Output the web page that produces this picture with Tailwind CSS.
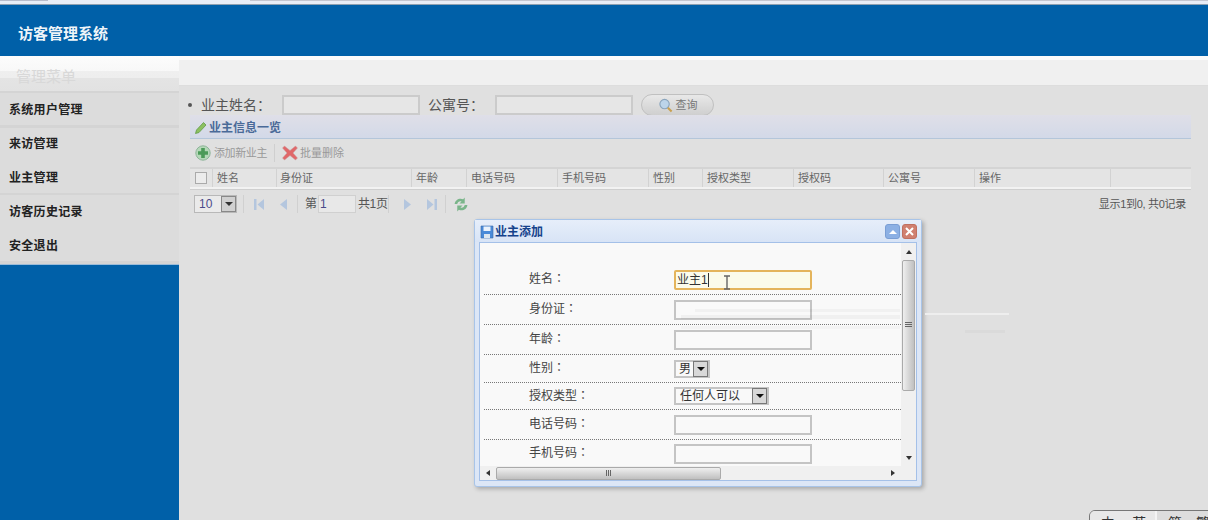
<!DOCTYPE html>
<html lang="zh-CN">
  <head>
    <meta charset="UTF-8" />
    <title>访客管理系统</title>
    <script src="https://cdn.jsdelivr.net/npm/@tailwindcss/browser@4"></script>
  </head>
  <body class="relative w-[1208px] h-[520px] overflow-hidden bg-[#e0e0e0] text-[#555] font-['Liberation_Sans','Noto_Sans_CJK_SC',sans-serif] text-xs">
    <!-- browser strip -->
    <div class="h-[4px] bg-[#e8edf6] flex justify-between">
      <div class="w-[48px] h-[1px] bg-[#b8bccb]"></div>
      <div class="w-[958px] h-[1px] bg-[#c4c6d0]"></div>
    </div>
    <div class="h-[1px] bg-[#8fa0b0]"></div>

    <!-- header -->
    <div class="h-[51px] bg-[#0060a8] flex items-center pl-[18px] pt-[6px] text-[15px] font-bold text-white/95">访客管理系统</div>

    <div class="flex h-[464px]">
      <!-- left menu -->
      <div class="w-[179px] bg-[#0060a8] flex flex-col">
        <div class="h-[35px] pl-[16px] pt-[10px] text-[15px] leading-[21px] text-[#d8d8d8] bg-[linear-gradient(#fcfcfc_0,#f8f8f8_15px,#efefef_15px,#eeeeee_22px,#e4e4e4_22px,#e2e2e2_100%)]">管理菜单</div>
        <div class="h-[34px] flex items-center pl-[9px] pt-[2px] font-bold tracking-[.3px] text-[#222] bg-[#dcdcdc] border-t-[2px] border-[#d4d4d4]">系统用户管理</div>
        <div class="h-[34px] flex items-center pl-[9px] font-bold tracking-[.3px] text-[#222] bg-[#dcdcdc] border-t-[3px] border-[#d4d4d4]">来访管理</div>
        <div class="h-[34px] flex items-center pl-[9px] pt-[4px] font-bold tracking-[.3px] text-[#222] bg-[#dcdcdc]">业主管理</div>
        <div class="h-[34px] flex items-center pl-[9px] pt-[2px] font-bold tracking-[.3px] text-[#222] bg-[#dcdcdc] border-t-[2px] border-[#d4d4d4]">访客历史记录</div>
        <div class="h-[37px] flex items-center pl-[9px] pt-[3px] font-bold tracking-[.3px] text-[#222] bg-[#dcdcdc] border-b-[3px] border-[#d4d4d4]">安全退出</div>
        <div class="h-px bg-[#9dbcd8]"></div>
      </div>

      <!-- main -->
      <div class="flex-1 flex flex-col">
        <div class="h-[4px] bg-[#fafafa]"></div>
        <div class="h-[26px] bg-[#f0f0f0] border-b border-[#ddd]"></div>

        <!-- search -->
        <div class="h-[20px] mt-[9px] flex items-center pl-[9px] text-[14px] text-[#555]">
          <span class="w-[4px] h-[4px] rounded-full bg-[#555] mr-[9px]"></span>
          <span class="w-[81px]">业主姓名：</span>
          <div class="w-[138px] h-[20px] border-2 border-[#cbcbcb] bg-[#e6e6e6]"></div>
          <span class="w-[67px] ml-[8px]">公寓号：</span>
          <div class="w-[138px] h-[20px] border-2 border-[#cbcbcb] bg-[#e6e6e6]"></div>
          <div class="ml-[8px] w-[73px] h-[22px] rounded-full border border-[#c0c0c0] bg-gradient-to-b from-[#e8e8e8] to-[#cfcfcf] flex items-center justify-center gap-[3px] text-[11px] text-[#777]">
            <svg width="15" height="15" viewBox="0 0 16 16"><circle cx="7" cy="6.500" r="5" fill="#bcd4ea" stroke="#8aa4bc" stroke-width="1.200"/><path d="M10.500 10.500l4 4" stroke="#c9a050" stroke-width="2.200"/></svg>
            <span>查询</span>
          </div>
        </div>

        <!-- grid panel -->
        <div class="ml-[11px] w-[1001px]">
          <div class="h-[24px] flex items-center pl-[4px] pt-[2px] gap-[2px] font-bold text-[#4a6a98] bg-gradient-to-b from-[#dfdfe8] to-[#d3d9e8] border-b border-[#b4c6da]">
            <svg width="13" height="14" viewBox="0 0 13 14"><path d="M1.500 12.500l1-3.500 7-7.500 2.500 2.500-7 7.500z" fill="#8cc060" stroke="#5f9a48" stroke-width=".8"/></svg>
            <span>业主信息一览</span>
          </div>
          <div class="h-[28px] flex items-center pl-[5px] text-[11px] text-[#999]">
            <svg width="16" height="16" viewBox="0 0 16 16"><circle cx="8" cy="8" r="7.200" fill="#b5d8b8" stroke="#8fb49a"/><path d="M6.200 3h3.600v3.200H13v3.600H9.800V13H6.200V9.800H3V6.200h3.200z" fill="#4b9a58"/></svg>
            <span class="ml-[3px] mr-[7px] w-[53px] whitespace-nowrap tracking-[-.4px]">添加新业主</span>
            <span class="w-px h-[18px] bg-[#cfcfcf] mr-[7px]"></span>
            <svg width="16" height="16" viewBox="0 0 16 16"><path d="M2.500 1L8 5.500 13.500 1 15.500 3 11 8l4.500 5-2 2L8 10.500 2.500 15 .5 13 5 8 .5 3z" fill="#e0686a" stroke="#c9a0a0" stroke-width=".5"/></svg>
            <span class="ml-[2px]">批量删除</span>
          </div>
          <!-- header row -->
          <div class="h-[22px] flex text-[11px] border-t-[2px] border-b-[2px] border-t-[#d4d4d4] border-b-[#f2f2f2] bg-[#e4e4e4] text-[#666]">
            <div class="w-[23px] pl-[5px] flex items-center border-r border-[#d2d2d2]"><span class="w-[12px] h-[12px] border border-[#aaa] bg-[#ececec]"></span></div>
            <div class="w-[64px] pl-[4px] flex items-center border-r border-[#d2d2d2]">姓名</div>
            <div class="w-[135px] pl-[3px] flex items-center border-r border-[#d2d2d2]">身份证</div>
            <div class="w-[55px] pl-[4px] flex items-center border-r border-[#d2d2d2]">年龄</div>
            <div class="w-[91px] pl-[4px] flex items-center border-r border-[#d2d2d2]">电话号码</div>
            <div class="w-[91px] pl-[4px] flex items-center border-r border-[#d2d2d2]">手机号码</div>
            <div class="w-[54px] pl-[4px] flex items-center border-r border-[#d2d2d2]">性别</div>
            <div class="w-[91px] pl-[4px] flex items-center border-r border-[#d2d2d2]">授权类型</div>
            <div class="w-[90px] pl-[4px] flex items-center border-r border-[#d2d2d2]">授权码</div>
            <div class="w-[91px] pl-[4px] flex items-center border-r border-[#d2d2d2]">公寓号</div>
            <div class="w-[136px] pl-[4px] flex items-center border-r border-[#d2d2d2]">操作</div>
          </div>
          <div class="h-px bg-[#cfcfcf]"></div>
          <!-- pager -->
          <div class="h-[28px] flex items-center pl-[4px] text-[#555]">
            <div class="w-[43px] h-[18px] border border-[#b8b8b8] bg-[#eaeaea] flex items-center justify-between pl-[4px] text-[#4a4a8a]">
              <span>10</span>
              <span class="w-[15px] h-[16px] bg-[#d0d0d0] border border-[#888] flex items-center justify-center"><span class="border-x-[4px] border-t-[4px] border-x-transparent border-t-[#333]"></span></span>
            </div>
            <span class="w-px h-[18px] bg-[#d0d0d0] ml-[6px] mr-[10px]"></span>
            <svg width="10" height="13" viewBox="0 0 10 13" class="mr-[16px]"><path d="M0 1h2.500v11H0zM10 1v11L3.500 6.500z" fill="#b4c6de"/></svg>
            <svg width="7" height="13" viewBox="0 0 7 13" class="mr-[10px]"><path d="M7 1v11L0 6.500z" fill="#b4c6de"/></svg>
            <span class="w-px h-[18px] bg-[#d0d0d0] mr-[7px]"></span>
            <span>第</span>
            <div class="w-[38px] h-[18px] ml-px mr-[2px] border border-[#d0d0d0] bg-[#e8e8e8] pl-px leading-[16px] text-[#4a4a8a]">1</div>
            <span class="w-[27px] whitespace-nowrap tracking-[-.4px]">共1页</span>
            <span class="w-px h-[18px] bg-[#d0d0d0] ml-[3px] mr-[15px]"></span>
            <svg width="7" height="13" viewBox="0 0 7 13" class="mr-[16px]"><path d="M0 1v11l7-5.500z" fill="#b4c6de"/></svg>
            <svg width="10" height="13" viewBox="0 0 10 13" class="mr-[8px]"><path d="M0 1v11l6.500-5.500zM7.500 1H10v11H7.500z" fill="#b4c6de"/></svg>
            <span class="w-px h-[18px] bg-[#d0d0d0] mr-[7px]"></span>
            <svg width="16" height="15" viewBox="0 0 15 14"><path d="M1.500 6.500C2 2.500 6 .5 9.500 2L11 .5V6H6L8 4.200C6 3.500 4.500 4.800 4 6.500zM13.500 7.500C13 11.500 9 13.500 5.500 12L4 13.500V8h5L7 9.800c2 .7 3.500-.6 4-2.300z" fill="#7ab58a"/></svg>
            <span class="ml-auto mr-[5px] text-[11px] tracking-[-.3px] text-[#555]">显示1到0, 共0记录</span>
          </div>
        </div>
      </div>
    </div>

    <!-- dialog -->
    <div class="absolute left-[474px] top-[219px] w-[448px] h-[268px] rounded-[3px] border border-[#a8c4e8] bg-[#dce6f6] shadow-[2px_2px_4px_rgba(0,0,0,.25)] flex flex-col px-[4px] pb-[5px]">
      <div class="h-[22px] flex items-center gap-px pt-[1px] font-bold text-[#15428b] bg-gradient-to-b from-[#e6eefa] to-[#d8e4f6] -mx-[4px] pl-[5px] pr-[4px]">
        <svg width="14" height="14" viewBox="0 0 14 14"><path d="M1 1h12v12H1z" fill="#4a8ad8" stroke="#3a6aa8" stroke-width=".6"/><path d="M3.500 1.500h7v4.500h-7z" fill="#eaf2fc"/><path d="M4 9h6v4H4z" fill="#dce6f0"/></svg>
        <span>业主添加</span>
        <span class="ml-auto w-[15px] h-[15px] rounded-[3px] bg-[#8cb0e4] border border-[#7a9ed4] flex items-center justify-center"><span class="border-x-[4px] border-b-[4px] border-x-transparent border-b-white"></span></span>
        <span class="ml-px w-[15px] h-[15px] rounded-[3px] bg-[#d08070] border border-[#c07060] flex items-center justify-center text-white leading-none">
          <svg width="9" height="9" viewBox="0 0 9 9"><path d="M1 1l7 7M8 1L1 8" stroke="#fff" stroke-width="2"/></svg>
        </span>
      </div>
      <div class="flex-1 border border-[#a4c0e8] bg-[#f9f9f9] relative overflow-hidden">
        <!-- form rows -->
        <div class="pl-[4px] w-[421px] text-[#444]">
          <div class="h-[52px] flex items-end pb-[4px] pl-[45px] border-b border-dotted border-[#777]">
            <span class="w-[145px] mb-[3px]">姓名<span lang="zh-TW" class="font-['Noto_Sans_CJK_TC']">：</span></span>
            <div class="w-[138px] h-[20px] border-2 border-[#e4b45c] bg-[#fbfbeb] rounded-[2px] pl-[1px] text-[#333] leading-[16px] flex items-center">业主1<span class="w-px h-[14px] bg-[#333]"></span></div>
          </div>
          <div class="h-[30px] flex items-center pl-[45px] border-b border-dotted border-[#777]">
            <span class="w-[145px] mb-[3px]">身份证<span lang="zh-TW" class="font-['Noto_Sans_CJK_TC']">：</span></span>
            <div class="w-[138px] h-[20px] border-2 border-[#c4c4c4] bg-[#f9f9f9]"></div>
          </div>
          <div class="h-[30px] flex items-center pl-[45px] border-b border-dotted border-[#777]">
            <span class="w-[145px] mb-[2px]">年龄<span lang="zh-TW" class="font-['Noto_Sans_CJK_TC']">：</span></span>
            <div class="w-[138px] h-[20px] border-2 border-[#c4c4c4] bg-[#f9f9f9]"></div>
          </div>
          <div class="h-[28px] flex items-center pl-[45px] border-b border-dotted border-[#777]">
            <span class="w-[145px] mb-[2px]">性别<span lang="zh-TW" class="font-['Noto_Sans_CJK_TC']">：</span></span>
            <div class="w-[36px] h-[18px] border-2 border-[#c4c4c4] bg-[#f9f9f9] flex items-center justify-between pl-[3px] text-[#333]">
              <span>男</span>
              <span class="w-[15px] h-[16px] bg-[#d8d8d8] border border-[#777] flex items-center justify-center"><span class="border-x-[4px] border-t-[4px] border-x-transparent border-t-[#111]"></span></span>
            </div>
          </div>
          <div class="h-[27px] flex items-center pl-[45px] border-b border-dotted border-[#777]">
            <span class="w-[145px] mb-[1px]">授权类型<span lang="zh-TW" class="font-['Noto_Sans_CJK_TC']">：</span></span>
            <div class="w-[95px] h-[18px] border-2 border-[#c4c4c4] bg-[#f9f9f9] flex items-center justify-between pl-[4px] text-[#333]">
              <span>任何人可以</span>
              <span class="w-[15px] h-[16px] bg-[#d8d8d8] border border-[#777] flex items-center justify-center"><span class="border-x-[4px] border-t-[4px] border-x-transparent border-t-[#111]"></span></span>
            </div>
          </div>
          <div class="h-[30px] flex items-center pl-[45px] border-b border-dotted border-[#777]">
            <span class="w-[145px] mb-[2px]">电话号码<span lang="zh-TW" class="font-['Noto_Sans_CJK_TC']">：</span></span>
            <div class="w-[138px] h-[20px] border-2 border-[#c4c4c4] bg-[#f9f9f9]"></div>
          </div>
          <div class="h-[30px] flex items-start pt-[4px] pl-[45px]">
            <span class="w-[145px]">手机号码<span lang="zh-TW" class="font-['Noto_Sans_CJK_TC']">：</span></span>
            <div class="w-[138px] h-[20px] border-2 border-[#c4c4c4] bg-[#f9f9f9]"></div>
          </div>
        </div>

        <!-- vertical scrollbar -->
        <div class="absolute right-0 top-0 bottom-[14px] w-[15px] bg-[#f0f0f0] flex flex-col items-center">
          <span class="mt-[7px] border-x-[3px] border-b-[4px] border-x-transparent border-b-[#333]"></span>
          <div class="mt-[6px] w-[13px] h-[131px] border border-[#aaa] rounded-[2px] bg-gradient-to-r from-[#efefef] to-[#c0c0c0] flex flex-col items-center justify-start pt-[61px] gap-px">
            <span class="w-[7px] h-px bg-[#666]"></span><span class="w-[7px] h-px bg-[#666]"></span><span class="w-[7px] h-px bg-[#666]"></span>
          </div>
          <span class="mt-auto mb-[6px] border-x-[3px] border-t-[4px] border-x-transparent border-t-[#333]"></span>
        </div>
        <!-- horizontal scrollbar -->
        <div class="absolute left-0 right-0 bottom-0 h-[14px] bg-[#f0f0f0] flex items-center pr-[15px]">
          <span class="ml-[6px] border-y-[3px] border-r-[4px] border-y-transparent border-r-[#333]"></span>
          <div class="ml-[6px] w-[225px] h-[13px] border border-[#aaa] rounded-[2px] bg-gradient-to-b from-[#efefef] to-[#c0c0c0] flex items-center justify-center gap-px">
            <span class="w-px h-[6px] bg-[#666]"></span><span class="w-px h-[6px] bg-[#666]"></span><span class="w-px h-[6px] bg-[#666]"></span>
          </div>
          <span class="ml-auto mr-[6px] border-y-[3px] border-l-[4px] border-y-transparent border-l-[#333]"></span>
        </div>
      </div>
    </div>

    <!-- text cursor over the name field -->
    <svg class="absolute left-[723px] top-[275px]" width="8" height="15" viewBox="0 0 8 15"><path d="M1 1h6M4 1v13M1 14h6" stroke="#666" stroke-width="1.400" fill="none"/></svg>

    <!-- faint leftovers of a fading notice, lying over the dialog -->
    <div class="absolute left-[695px] top-[309px] w-[205px] h-[3px] bg-black/[.03]"></div>
    <div class="absolute left-[681px] top-[315px] w-[219px] h-[4px] bg-black/[.035]"></div>
    <div class="absolute left-[681px] top-[326px] w-[219px] h-[3px] bg-black/[.025]"></div>
    <div class="absolute left-[925px] top-[313px] w-[84px] h-[2px] bg-[#eeeeee]"></div>
    <div class="absolute left-[965px] top-[330px] w-[40px] h-[3px] bg-[#dadada]"></div>

    <!-- ime status bar, cut by the window edge -->
    <div class="absolute left-[1089px] top-[510px] w-[130px] h-[20px] rounded-tl-[6px] border border-[#777] bg-[#ddd] flex text-sm leading-[18px] text-[#333] overflow-hidden">
      <div class="w-[67px] flex justify-around pl-[2px] pt-[3px] bg-[#e8e8e8] border-r-2 border-[#f4f4f4]"><span>中</span><span>英</span></div>
      <div class="flex-1 flex pl-[11px] gap-[14px] pt-[3px]"><span>简</span><span>繁</span></div>
    </div>
  </body>
</html>
